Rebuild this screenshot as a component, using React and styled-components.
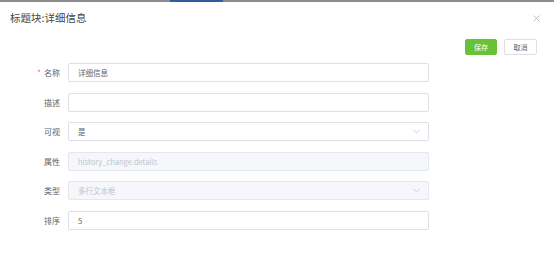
import React from 'react'
import styled, { createGlobalStyle } from 'styled-components'

const GlobalStyle = createGlobalStyle`
  html, body { margin: 0; padding: 0; background: #fff; }
  body { font-family: "Noto Sans CJK SC", "Liberation Sans", sans-serif; }
`

const Page = styled.div`
  width: 554px;
  height: 254px;
  background: #fff;
  overflow: hidden;
`

const TopStrip = styled.div`
  display: flex;
  height: 2px;
  background: #8c8c8c;
`

const StripActive = styled.div`
  margin-left: 170px;
  width: 53px;
  background: #2f5c9c;
`

const Header = styled.div`
  display: flex;
  align-items: center;
  justify-content: space-between;
  height: 35px;
  padding: 0 14px 0 10px;
  margin-top: -2px;
`

const Title = styled.span`
  font-size: 10.5px;
  color: #444;
`

const CloseIcon = styled.svg`
  margin-top: 1px;
`

const Actions = styled.div`
  display: flex;
  justify-content: flex-end;
  gap: 7px;
  padding-right: 17px;
  margin-top: 4px;
`

const Button = styled.button`
  width: ${({ primary }) => (primary ? '32px' : '33px')};
  height: 16px;
  padding: 0;
  font-family: inherit;
  font-size: 7px;
  border-radius: 2px;
  border: 1px solid ${({ primary }) => (primary ? '#67c23a' : '#dcdfe6')};
  background: ${({ primary }) => (primary ? '#67c23a' : '#fff')};
  color: ${({ primary }) => (primary ? '#fff' : '#606266')};
`

const Form = styled.div`
  display: flex;
  flex-direction: column;
  gap: 10.5px;
  margin-top: 8px;
`

const Row = styled.div`
  display: grid;
  grid-template-columns: 68px 361px;
  align-items: center;
  height: 19px;
`

const Label = styled.label`
  text-align: right;
  padding-right: 8px;
  font-size: 8px;
  color: #606266;
`

const Star = styled.span`
  color: #f56c6c;
  margin-right: 3px;
`

const Field = styled.div`
  display: flex;
  align-items: center;
  justify-content: space-between;
  box-sizing: border-box;
  height: 19px;
  padding: 0 8px 0 9px;
  border: 1px solid #dcdfe6;
  border-radius: 2px;
  background: ${({ disabled }) => (disabled ? '#f5f7fa' : '#fff')};
  border-color: ${({ disabled }) => (disabled ? '#e4e7ed' : '#dcdfe6')};
  font-size: 7.5px;
  color: ${({ disabled }) => (disabled ? '#c0c4cc' : '#606266')};
`

const Chevron = () => (
  <svg width="7" height="5" viewBox="0 0 7 5">
    <path d="M0.5 1 L3.5 3.8 L6.5 1" fill="none" stroke="#c0c4cc" strokeWidth="0.8" />
  </svg>
)

const rows = [
  { label: '名称', value: '详细信息', required: true },
  { label: '描述', value: '' },
  { label: '可视', value: '是', select: true },
  { label: '属性', value: 'history_change.details', disabled: true },
  { label: '类型', value: '多行文本框', disabled: true, select: true },
  { label: '排序', value: '5' },
]

export default function App() {
  return (
    <Page>
      <GlobalStyle />
      <TopStrip>
        <StripActive />
      </TopStrip>
      <Header>
        <Title>标题块:详细信息</Title>
        <CloseIcon width="7" height="7" viewBox="0 0 7 7">
          <path d="M0.5 0.5 L6.5 6.5 M6.5 0.5 L0.5 6.5" stroke="#b0b0b0" strokeWidth="0.8" />
        </CloseIcon>
      </Header>
      <Actions>
        <Button primary>保存</Button>
        <Button>取消</Button>
      </Actions>
      <Form>
        {rows.map((r) => (
          <Row key={r.label}>
            <Label>
              {r.required && <Star>*</Star>}
              {r.label}
            </Label>
            <Field disabled={r.disabled}>
              <span>{r.value}</span>
              {r.select && <Chevron />}
            </Field>
          </Row>
        ))}
      </Form>
    </Page>
  )
}
